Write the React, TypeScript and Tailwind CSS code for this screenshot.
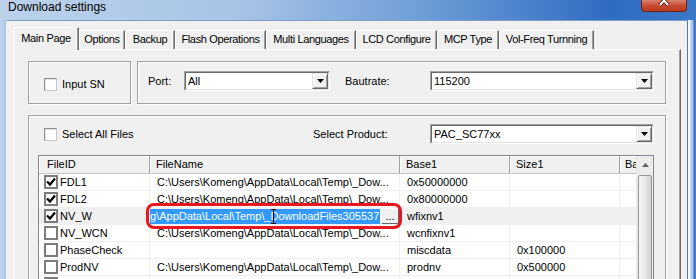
import React from "react";

const FILE = "C:\\Users\\Komeng\\AppData\\Local\\Temp\\_Dow...";

const rows = [
  { id: "FDL1", on: true, file: FILE, base: "0x50000000", size: "" },
  { id: "FDL2", on: true, file: FILE, base: "0x80000000", size: "" },
  { id: "NV_W", on: true, file: "", base: "wfixnv1", size: "", edit: true },
  { id: "NV_WCN", on: false, file: FILE, base: "wcnfixnv1", size: "" },
  { id: "PhaseCheck", on: false, file: "", base: "miscdata", size: "0x100000" },
  { id: "ProdNV", on: false, file: FILE, base: "prodnv", size: "0x500000" },
  { id: "", on: false, file: "", base: "", size: "" },
];

const tabs = [
  { label: "Options", w: "w-[46px]" },
  { label: "Backup", w: "w-[50px]" },
  { label: "Flash Operations", w: "w-[91px]" },
  { label: "Multi Languages", w: "w-[90px]" },
  { label: "LCD Configure", w: "w-[81px]" },
  { label: "MCP Type", w: "w-[62px]" },
  { label: "Vol-Freq Turnning", w: "w-[95px]" },
];

const Check = () => (
  <svg width="10" height="10" viewBox="0 0 10 10">
    <path d="M1 4.5 L4 7.5 L9 1.5" fill="none" stroke="#000" strokeWidth="2.2" />
  </svg>
);

const DownArrow = () => (
  <svg width="7" height="4" viewBox="0 0 7 4">
    <path d="M0 0 H7 L3.5 4 Z" fill="#000" />
  </svg>
);

const PlainBox = () => (
  <div className="w-[13px] h-[13px] bg-white border border-[#8f8f8f] border-r-[#c8c8c8] border-b-[#c8c8c8] shadow-[inset_1px_1px_0_#e3e3e3]" />
);

const RowBox = ({ on }: { on: boolean }) => (
  <div className="w-[14px] h-[14px] shrink-0 bg-white border-2 border-[#7c7c7c] flex items-center justify-center">
    {on && <Check />}
  </div>
);

const Combo = ({ value, w }: { value: string; w: string }) => (
  <div className={`${w} h-[20px] border border-[#a0a0a0] border-r-white border-b-white`}>
    <div className="h-full flex bg-white border border-[#696969] border-r-[#e3e3e3] border-b-[#e3e3e3]">
      <div className="flex-1 pl-[2px] text-[11px] leading-[16px]">{value}</div>
      <div className="w-[16px] h-full bg-[#f0f0f0] border border-[#e3e3e3] border-r-[#696969] border-b-[#696969] shadow-[inset_1px_1px_0_#fff,inset_-1px_-1px_0_#a0a0a0] flex items-center justify-center">
        <DownArrow />
      </div>
    </div>
  </div>
);

const Group = ({ className, children }: { className: string; children: React.ReactNode }) => (
  <div className={`border border-[#a0a0a0] shadow-[inset_1px_1px_0_#fff,1px_1px_0_#fff] ${className}`}>
    {children}
  </div>
);

const FileList = () => (
  <div className="relative ml-[9px] mt-[11px] w-[616px] h-[140px] border border-[#828790] bg-white flex overflow-hidden">
    <div className="w-[597px] overflow-hidden">
      <div className="flex h-[18px] bg-[#f0f0f0] border-b border-[#c5c5c5] text-[11px] whitespace-nowrap">
        <div className="w-[111px] shrink-0 pl-[8px] flex items-center border-r border-[#a0a0a0] shadow-[inset_1px_1px_0_#fff]">FileID</div>
        <div className="w-[250px] shrink-0 pl-[6px] flex items-center border-r border-[#a0a0a0] shadow-[inset_1px_1px_0_#fff]">FileName</div>
        <div className="w-[110px] shrink-0 pl-[6px] flex items-center border-r border-[#a0a0a0] shadow-[inset_1px_1px_0_#fff]">Base1</div>
        <div className="w-[110px] shrink-0 pl-[6px] flex items-center border-r border-[#a0a0a0] shadow-[inset_1px_1px_0_#fff]">Size1</div>
        <div className="w-[110px] shrink-0 pl-[5px] flex items-center shadow-[inset_1px_1px_0_#fff]">Ba</div>
      </div>
      {rows.map((r, i) => (
        <div
          key={i}
          className={`flex h-[17px] border-b border-[#f0f0f0] text-[11px] whitespace-nowrap ${r.edit ? "bg-[#f0f0f0]" : ""}`}
        >
          <div className="w-[111px] shrink-0 pl-[5px] flex items-center border-r border-[#f0f0f0]">
            <RowBox on={r.on} />
            <span className="ml-[2px] pt-[1px]">{r.id}</span>
          </div>
          {r.edit ? (
            <div className="w-[250px] shrink-0 flex items-center pr-[1px]">
              <div className="relative w-[230px] h-[15px] bg-[#3399ff] text-white overflow-hidden leading-[15px]">
                g\AppData\Local\Temp\_DownloadFiles305537
                <svg className="absolute left-[121px] top-0" width="5" height="15" viewBox="0 0 5 15">
                  <path d="M0 0.5 H5 M2.5 0.5 V14.5 M0 14.5 H5" stroke="#000" strokeWidth="1" fill="none" />
                </svg>
              </div>
              <div className="w-[18px] h-[16px] ml-[1px] bg-[#f0f0f0] border border-[#fff] border-r-[#696969] border-b-[#696969] text-[11px] leading-[11px] flex items-center justify-center">
                ...
              </div>
            </div>
          ) : (
            <div className="w-[250px] shrink-0 pl-[7px] pt-[1px] flex items-center border-r border-[#f0f0f0]">{r.file}</div>
          )}
          <div className="w-[110px] shrink-0 pl-[7px] pt-[1px] flex items-center border-r border-[#f0f0f0]">{r.base}</div>
          <div className="w-[110px] shrink-0 pl-[7px] pt-[1px] flex items-center border-r border-[#f0f0f0]">{r.size}</div>
          <div className="w-[110px] shrink-0" />
        </div>
      ))}
    </div>
    <div className="w-[17px] bg-[#ececec] border-l border-[#e6e6e6] flex flex-col items-center">
      <div className="h-[18px] flex items-center justify-center">
        <svg width="7" height="4" viewBox="0 0 7 4">
          <path d="M0 4 H7 L3.5 0 Z" fill="#606060" />
        </svg>
      </div>
      <div className="mt-[1px] w-[14px] flex-1 rounded-t-[2px] border border-[#979797] bg-[linear-gradient(90deg,#f6f6f6,#e4e4e4_60%,#d2d2d2)]" />
    </div>
    <div className="absolute left-[107px] top-[47px] w-[256px] h-[26px] border-[3px] border-[#e8161f] rounded-[8px]" />
  </div>
);

export default function App() {
  return (
    <div className="w-[696px] h-[279px] overflow-hidden flex flex-col bg-[linear-gradient(90deg,#bcd2eb_0%,#a6c3e5_35%,#6b9bd6_62%,#2e6cc2_88%,#3c79c8_100%)] font-['Liberation_Sans',Arial,sans-serif] text-black">
      <div className="h-[20px] shrink-0 flex items-start justify-between">
        <div className="pl-[8px] text-[12px] leading-[14px]">Download settings</div>
        <div className="mr-[9px] w-[46px] h-[12px] rounded-b-[4px] border border-t-0 border-[#6e2417] bg-[linear-gradient(180deg,#d9826e,#c8482f_55%,#b83a22)] overflow-hidden">
          <svg width="44" height="11" viewBox="0 0 44 11">
            <path d="M18 -4 L26 5 M26 -4 L18 5" stroke="#5a1a10" strokeWidth="4" />
            <path d="M18 -4 L26 5 M26 -4 L18 5" stroke="#fff" strokeWidth="2" />
          </svg>
        </div>
      </div>
      <div className="flex-1 flex">
        <div className="w-[6px] bg-[linear-gradient(90deg,#c3d7ee,#aac7e8)]" />
        <div className="w-[682px] bg-[#f0f0f0] border-l border-l-[#eef3f9] border-t border-t-[#7d9dc5] border-r border-r-[#56799f] pt-[6px] px-[6px] flex flex-col">
          <div className="h-[22px] flex items-end text-[11px] leading-[13px] whitespace-nowrap tracking-[-0.35px]">
            <div className="relative z-10 -mb-px h-[23px] w-[66px] bg-[#f0f0f0] border-l border-t border-white border-r border-r-[#696969] shadow-[inset_-1px_0_0_#a0a0a0] rounded-tl-[2px] pt-[4px] flex justify-center">
              Main Page
            </div>
            {tabs.map((t) => (
              <div
                key={t.label}
                className={`${t.w} h-[19px] border-l border-t border-white border-r border-r-[#696969] shadow-[inset_-1px_0_0_#a0a0a0] pt-[2px] flex justify-center`}
              >
                {t.label}
              </div>
            ))}
          </div>
          <div className="flex-1 w-[668px] border-l border-t border-white border-r border-r-[#696969] shadow-[inset_-1px_0_0_#a0a0a0] pl-[14px] pt-[11px] text-[11px]">
            <div className="flex gap-[6px]">
              <Group className="w-[103px] h-[43px] pl-[15px] flex items-center pt-[3px]">
                <PlainBox />
                <span className="ml-[5px]">Input SN</span>
              </Group>
              <Group className="w-[529px] h-[43px] pl-[10px] pt-[9px] flex items-start">
                <div className="flex items-center">
                  <span className="w-[36px]">Port:</span>
                  <Combo value="All" w="w-[146px]" />
                  <span className="ml-[15px] w-[85px]">Bautrate:</span>
                  <Combo value="115200" w="w-[224px]" />
                </div>
              </Group>
            </div>
            <Group className="mt-[11px] w-[638px] h-[200px] pt-[8px]">
              <div className="flex items-center h-[20px] pl-[15px]">
                <PlainBox />
                <span className="ml-[5px] w-[251px]">Select All Files</span>
                <span className="w-[117px]">Select Product:</span>
                <Combo value="PAC_SC77xx" w="w-[224px]" />
              </div>
              <FileList />
            </Group>
          </div>
        </div>
        <div className="w-[8px] bg-[linear-gradient(90deg,#f2f6fb_0px,#f2f6fb_2px,#a9c6e8_3px,#a9c6e8_5px,#2f6dc2_6px,#4a85cf_8px)]" />
      </div>
    </div>
  );
}
